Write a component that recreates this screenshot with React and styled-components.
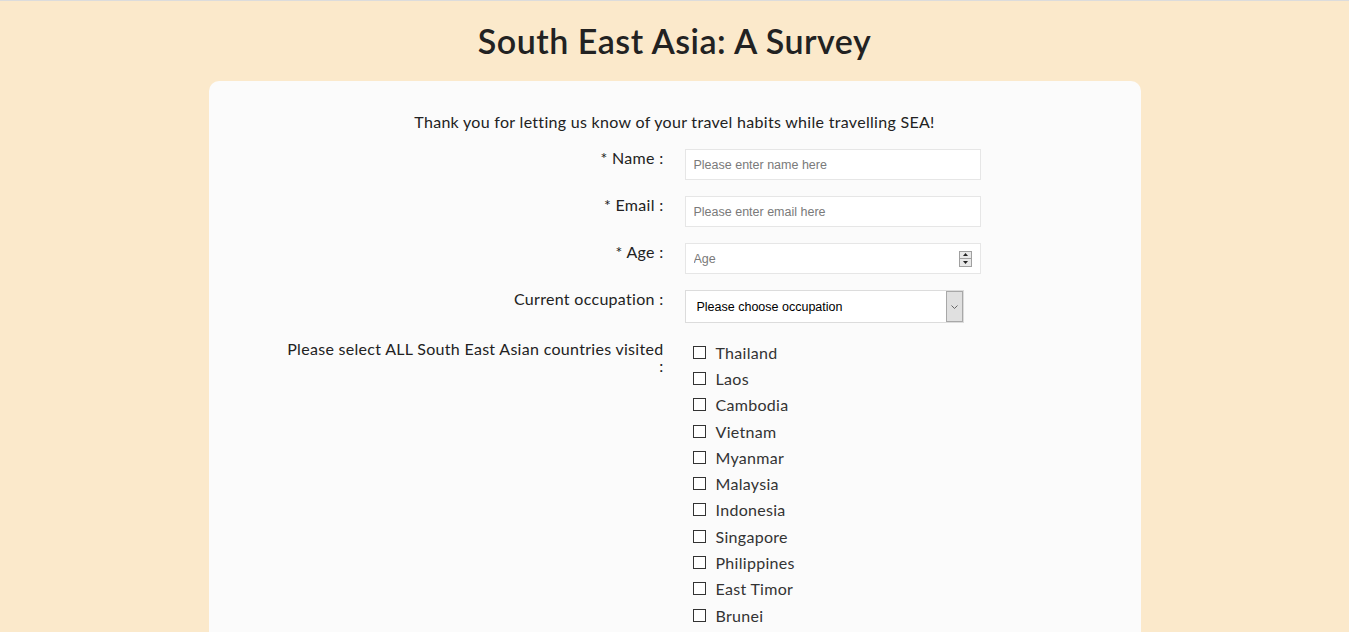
import React from "react";
import styled, { createGlobalStyle } from "styled-components";

const GlobalStyle = createGlobalStyle`
  html, body {
    margin: 0;
    padding: 0;
  }
  body {
    background: #fbe9cb;
    border-top: 1px solid #dcdcdc;
    font-family: "Lato", "Open Sans", sans-serif;
    letter-spacing: 0.3px;
    color: #222;
    overflow: hidden;
  }
`;

const Title = styled.h1`
  margin: 20px 0 0;
  height: 60px;
  text-align: center;
  font-size: 34px;
  font-weight: 600;
  line-height: 40px;
  letter-spacing: 0.5px;
  color: #222;
`;

const Card = styled.form`
  width: 932px;
  margin: 0 auto;
  padding: 30px 0 40px;
  box-sizing: border-box;
  background: #fbfbfb;
  border-radius: 10px;
  min-height: 600px;
`;

const Intro = styled.p`
  margin: 0 0 16px;
  text-align: center;
  font-size: 16px;
  line-height: 22px;
  color: #222;
`;

const Row = styled.div`
  display: grid;
  grid-template-columns: 455px 1fr;
  column-gap: 21px;
  align-items: start;
  margin-bottom: 16px;
`;

const Label = styled.label`
  text-align: right;
  font-size: 16px;
  line-height: 17px;
  color: #222;
  padding-top: ${p => p.$top || 0}px;
`;

const TextInput = styled.input`
  width: 296px;
  height: 31px;
  box-sizing: border-box;
  border: 1px solid #e6e6e6;
  background: #fff;
  padding: 0 8px;
  font-family: "Liberation Sans", Arial, sans-serif;
  font-size: 12.5px;
  color: #333;
  outline: none;
  &::placeholder {
    color: #7a7a7a;
  }
`;

const NumberBox = styled.div`
  display: flex;
  align-items: center;
  width: 296px;
  height: 31px;
  box-sizing: border-box;
  border: 1px solid #e6e6e6;
  background: #fff;
  padding: 0 8px 0 0;
`;

const BareInput = styled.input`
  flex: 1;
  min-width: 0;
  height: 100%;
  border: none;
  background: transparent;
  padding: 0 8px;
  font-family: "Liberation Sans", Arial, sans-serif;
  font-size: 12.5px;
  outline: none;
  &::placeholder {
    color: #7a7a7a;
  }
`;

const Spinner = styled.div`
  display: flex;
  flex-direction: column;
  width: 13px;
  height: 16px;
  border: 1px solid #a0a0a0;
  box-sizing: border-box;
  background: #e8e8e8;
`;

const SpinHalf = styled.span`
  flex: 1;
  display: flex;
  align-items: center;
  justify-content: center;
  ${p => p.$top && "border-bottom: 1px solid #a0a0a0;"}
`;

const SelectBox = styled.div`
  display: flex;
  width: 279px;
  height: 33px;
  box-sizing: border-box;
  border: 1px solid #dcdcdc;
  background: #fff;
`;

const Select = styled.select`
  flex: 1;
  appearance: none;
  border: none;
  background: transparent;
  padding: 0 11px;
  font-family: "Liberation Sans", Arial, sans-serif;
  font-size: 12.5px;
  color: #000;
  outline: none;
`;

const SelectArrow = styled.span`
  width: 17px;
  display: flex;
  align-items: center;
  justify-content: center;
  background: #e0e0e0;
  border: 1px solid #a8a8a8;
  box-sizing: border-box;
`;

const CheckList = styled.ul`
  list-style: none;
  margin: 0;
  padding: 0 0 0 8px;
`;

const CheckItem = styled.li`
  display: flex;
  align-items: center;
  height: 26.3px;
  font-size: 16px;
  color: #333;
`;

const Box = styled.span`
  width: 13px;
  height: 13px;
  box-sizing: border-box;
  border: 1.5px solid #333;
  background: #fff;
  margin-right: 10px;
`;

const countries = [
  "Thailand",
  "Laos",
  "Cambodia",
  "Vietnam",
  "Myanmar",
  "Malaysia",
  "Indonesia",
  "Singapore",
  "Philippines",
  "East Timor",
  "Brunei",
];

const App = () => {
  return (
    <>
      <GlobalStyle />
      <Title>South East Asia: A Survey</Title>
      <Card>
        <Intro>Thank you for letting us know of your travel habits while travelling SEA!</Intro>

        <Row>
          <Label>* Name :</Label>
          <TextInput placeholder="Please enter name here" />
        </Row>

        <Row>
          <Label>* Email :</Label>
          <TextInput placeholder="Please enter email here" />
        </Row>

        <Row>
          <Label>* Age :</Label>
          <NumberBox>
            <BareInput placeholder="Age" />
            <Spinner>
              <SpinHalf $top>
                <svg width="5" height="3" viewBox="0 0 5 3"><path d="M0 3 L2.5 0 L5 3 Z" fill="#222" /></svg>
              </SpinHalf>
              <SpinHalf>
                <svg width="5" height="3" viewBox="0 0 5 3"><path d="M0 0 L2.5 3 L5 0 Z" fill="#222" /></svg>
              </SpinHalf>
            </Spinner>
          </NumberBox>
        </Row>

        <Row>
          <Label>Current occupation :</Label>
          <SelectBox>
            <Select defaultValue="">
              <option value="">Please choose occupation</option>
              <option>Student</option>
              <option>Full time work</option>
              <option>Part time work</option>
              <option>Other</option>
            </Select>
            <SelectArrow>
              <svg width="7" height="4" viewBox="0 0 7 4">
                <path d="M0.5 0.5 L3.5 3.5 L6.5 0.5" fill="none" stroke="#666" strokeWidth="1" />
              </svg>
            </SelectArrow>
          </SelectBox>
        </Row>

        <Row>
          <Label $top={1}>
            Please select ALL South East Asian countries visited
            <br />:
          </Label>
          <CheckList>
            {countries.map(c => (
              <CheckItem key={c}>
                <Box />
                {c}
              </CheckItem>
            ))}
          </CheckList>
        </Row>
      </Card>
    </>
  );
};

export default App;
